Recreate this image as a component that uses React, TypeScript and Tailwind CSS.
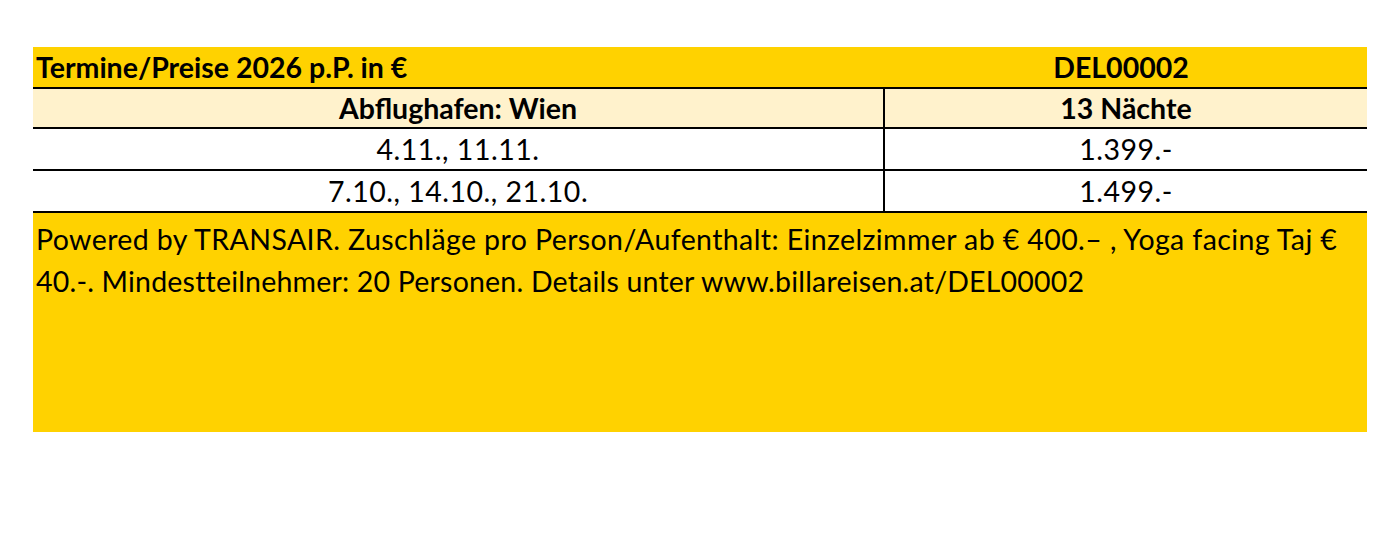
import React from "react";

const rows = [
  { dates: "4.11., 11.11.", price: "1.399.-" },
  { dates: "7.10., 14.10., 21.10.", price: "1.499.-" },
];

const App: React.FC = () => {
  return (
    <div className="w-[1400px] h-[547px] bg-white pt-[47px] pl-[33px] font-['Lato','Open_Sans',sans-serif] text-black">
      <div className="w-[1334px] text-[28.5px]">
        <div className="flex h-[42px] items-center bg-[#ffd200] border-b-2 border-black font-bold">
          <div className="w-[852px] pl-[3px]">Termine/Preise 2026 p.P. in €</div>
          <div className="flex-1 text-center pr-[10px]">DEL00002</div>
        </div>
        <div className="flex h-[40px] bg-[#fff2cc] border-b-2 border-black font-bold">
          <div className="w-[852px] flex items-center justify-center border-r-2 border-black">Abflughafen: Wien</div>
          <div className="flex-1 flex items-center justify-center">13 Nächte</div>
        </div>
        {rows.map((r) => (
          <div key={r.price} className="flex h-[42px] bg-white border-b-2 border-black tabular-nums tracking-[0.5px]">
            <div className="w-[852px] flex items-center justify-center border-r-2 border-black">{r.dates}</div>
            <div className="flex-1 flex items-center justify-center">{r.price}</div>
          </div>
        ))}
        <div className="h-[219px] bg-[#ffd200] px-[3px] pt-[5px] leading-[42px] whitespace-nowrap">
          <span className="tracking-[0.4px]">
            Powered by TRANSAIR. Zuschläge pro Person/Aufenthalt: Einzelzimmer ab € 400.– , Yoga facing Taj €
          </span>
          <br />
          <span className="tracking-[0.2px]">
            40.-. Mindestteilnehmer: 20 Personen. Details unter www.billareisen.at/DEL00002
          </span>
        </div>
      </div>
    </div>
  );
};

export default App;
